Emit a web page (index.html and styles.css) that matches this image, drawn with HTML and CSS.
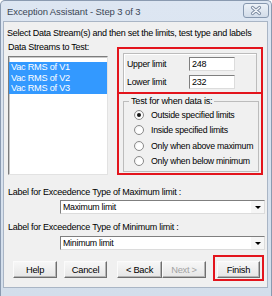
FILE: index.html
```html
<!DOCTYPE html>
<html>
<head>
<meta charset="utf-8">
<link rel="stylesheet" href="styles.css">
</head>
<body>
<div class="window">
  <div class="titlebar">
    <span class="title">Exception Assistant - Step 3 of 3</span>
    <div class="close">
      <svg width="24" height="13" viewBox="0 0 24 13">
        <path d="M8.5 3.5 L15.5 9.5 M15.5 3.5 L8.5 9.5" stroke="#7d8ca2" stroke-width="3.2" stroke-linecap="round" fill="none"/>
        <path d="M8.5 3.5 L15.5 9.5 M15.5 3.5 L8.5 9.5" stroke="#f4f7fb" stroke-width="1.3" stroke-linecap="round" fill="none"/>
      </svg>
    </div>
  </div>
  <div class="client">
    <p class="intro">Select Data Stream(s) and then set the limits, test type and labels</p>
    <div class="main">
      <div class="streams">
        <div class="text-line">Data Streams to Test:</div>
        <ul class="listbox">
          <li class="sel">Vac RMS of V1</li>
          <li class="sel">Vac RMS of V2</li>
          <li class="sel">Vac RMS of V3</li>
        </ul>
      </div>
      <div class="settings">
        <div class="hl limits">
          <div class="panel">
            <div class="field"><span class="field-label">Upper limit</span><div class="edit">248</div></div>
            <div class="field"><span class="field-label">Lower limit</span><div class="edit">232</div></div>
          </div>
        </div>
        <div class="hl test">
          <fieldset class="group">
            <legend>Test for when data is:</legend>
            <div class="radio"><span class="dot on"></span>Outside specified limits</div>
            <div class="radio"><span class="dot"></span>Inside specified limits</div>
            <div class="radio"><span class="dot"></span>Only when above maximum</div>
            <div class="radio"><span class="dot"></span>Only when below minimum</div>
          </fieldset>
        </div>
      </div>
    </div>
    <div class="text-line lbl-max">Label for Exceedence Type of Maximum limit :</div>
    <div class="combo combo-max"><span class="combo-text">Maximum limit</span><span class="arrow"></span></div>
    <div class="text-line lbl-min">Label for Exceedence Type of Minimum limit :</div>
    <div class="combo combo-min"><span class="combo-text">Minimum limit</span><span class="arrow"></span></div>
    <div class="buttons">
      <div class="btn btn-help">Help</div>
      <div class="btn btn-cancel">Cancel</div>
      <div class="btn btn-back">&lt; Back</div>
      <div class="btn btn-next disabled">Next &gt;</div>
      <div class="hl finish-wrap"><div class="btn btn-finish">Finish</div></div>
    </div>
  </div>
</div>
</body>
</html>
```
FILE: styles.css
```css
html, body {
  margin: 0;
  padding: 0;
  background: #ffffff;
}
body {
  font-family: "Liberation Sans", Arial, sans-serif;
  font-size: 9px;
  letter-spacing: -0.25px;
  color: #000;
}
.window {
  width: 272px;
  height: 296px;
  box-sizing: border-box;
  background: linear-gradient(#dde6f2, #d3deeb);
  border: 1px solid #8a9ab0;
  border-bottom: none;
  border-radius: 5px 5px 0 0;
  padding: 0 3px 0 2px;
  display: flex;
  flex-direction: column;
  overflow: hidden;
}
.titlebar {
  height: 20px;
  display: flex;
  align-items: center;
}
.title {
  padding-left: 4px;
  font-size: 9.5px;
  letter-spacing: -0.1px;
  color: #3b4656;
}
.close {
  margin-left: auto;
  margin-right: -1px;
  align-self: flex-start;
  margin-top: 2px;
  width: 26px;
  height: 15px;
  box-sizing: border-box;
  border: 1px solid #8798af;
  border-radius: 3px;
  background: linear-gradient(#edf2f8, #d2dce9);
  display: flex;
  align-items: center;
  justify-content: center;
}
.close svg { display: block; }
.client {
  height: 267px;
  box-sizing: border-box;
  border: 1px solid #a9b5c5;
  background: #f0f0f0;
  padding-left: 4px;
}
.intro {
  margin: 5px 0 0 -1px;
  line-height: 12px;
}
.text-line {
  line-height: 12px;
  white-space: nowrap;
}
.main {
  display: flex;
  margin-top: 2px;
}
.streams {
  width: 100px;
}
.listbox {
  list-style: none;
  margin: 3px 0 0 0;
  padding: 5px 0 0 0;
  height: 119px;
  box-sizing: border-box;
  background: #fff;
  border: 1px solid;
  border-color: #7c7c7c #e2e2e2 #e2e2e2 #7c7c7c;
  box-shadow: inset 1px 1px 0 #c9c9c9;
}
.listbox li {
  line-height: 10.5px;
  height: 10.5px;
  padding-left: 2px;
  font-size: 9.2px;
  white-space: nowrap;
}
.listbox li.sel {
  background: #3399ff;
  color: #fff;
}
.settings {
  margin: 6px 0 0 9px;
  width: 146px;
}
.hl {
  border: 2px solid #e3141c;
}
.limits {
  height: 47px;
  box-sizing: border-box;
  padding: 4px 4px 0 4px;
  display: flex;
}
.panel {
  flex: 1;
  border: 1px solid #bcbcbc;
  border-bottom: none;
  box-shadow: inset 1px 1px 0 #fff;
  padding: 3px 0 0 3px;
}
.field {
  display: flex;
  align-items: center;
  height: 14px;
}
.field + .field {
  margin-top: 4px;
}
.field-label {
  width: 62px;
  font-size: 8.8px;
}
.edit {
  width: 46px;
  height: 14px;
  box-sizing: border-box;
  background: #fff;
  border: 1px solid;
  border-color: #7f7f7f #dcdcdc #dcdcdc #7f7f7f;
  padding-left: 2px;
  line-height: 12px;
  font-size: 9px;
}
.test {
  margin-top: -2px;
  padding: 0 2px 1px 4px;
}
.group {
  margin: 1px 0 0 0;
  padding: 0 0 2px 5px;
  border: 1px solid #bcbcbc;
  min-width: 0;
}
.group legend {
  padding: 0 2px;
  line-height: 12px;
  font-size: 9.2px;
}
.radio {
  display: flex;
  align-items: center;
  height: 15.5px;
  margin-left: 5px;
  gap: 7px;
  white-space: nowrap;
  font-size: 8.75px;
}
.dot {
  width: 10px;
  height: 10px;
  box-sizing: border-box;
  border-radius: 50%;
  border: 1px solid #8a8a8a;
  background: radial-gradient(circle at 60% 60%, #ffffff 40%, #e6e6e6 100%);
  display: flex;
  align-items: center;
  justify-content: center;
  flex: none;
}
.dot.on::after {
  content: "";
  width: 4px;
  height: 4px;
  border-radius: 50%;
  background: #151515;
}
.lbl-max {
  margin-top: 11px;
}
.lbl-min {
  margin-top: 7px;
}
.combo {
  margin-left: 52px;
  width: 205px;
  height: 14px;
  box-sizing: border-box;
  background: #fff;
  border: 1px solid;
  border-color: #7f7f7f #dcdcdc #dcdcdc #7f7f7f;
  display: flex;
  align-items: center;
}
.combo-max { margin-top: 2px; }
.combo-min { margin-top: 3px; }
.combo-text {
  flex: 1;
  padding-left: 2px;
  line-height: 12px;
  font-size: 8.8px;
}
.arrow {
  align-self: stretch;
  width: 13px;
  background: #f6f6f6;
  display: flex;
  align-items: center;
  justify-content: center;
}
.arrow::after {
  content: "";
  width: 0;
  height: 0;
  border-top: 3px solid #000;
  border-left: 3px solid transparent;
  border-right: 3px solid transparent;
}
.buttons {
  display: flex;
  align-items: flex-start;
  margin-top: 5px;
}
.btn {
  height: 17px;
  box-sizing: border-box;
  margin-top: 6px;
  border: 1px solid;
  border-color: #fbfbfb #6f6f6f #6f6f6f #fbfbfb;
  box-shadow: inset -1px -1px 0 #b4b4b4;
  background: linear-gradient(#f7f7f7, #e6e6e6);
  display: flex;
  align-items: center;
  justify-content: center;
  line-height: 12px;
  font-size: 9.3px;
}
.btn-help { width: 44px; margin-left: 5px; }
.btn-cancel { width: 43px; margin-left: 7px; }
.btn-back { width: 45px; margin-left: 10px; }
.btn-next { width: 44px; }
.btn.disabled { color: #a3a3a3; }
.finish-wrap {
  margin-left: 7px;
  padding: 4px 2px 1px 2px;
}
.btn-finish {
  width: 43px;
  margin-top: 0;
}
```
